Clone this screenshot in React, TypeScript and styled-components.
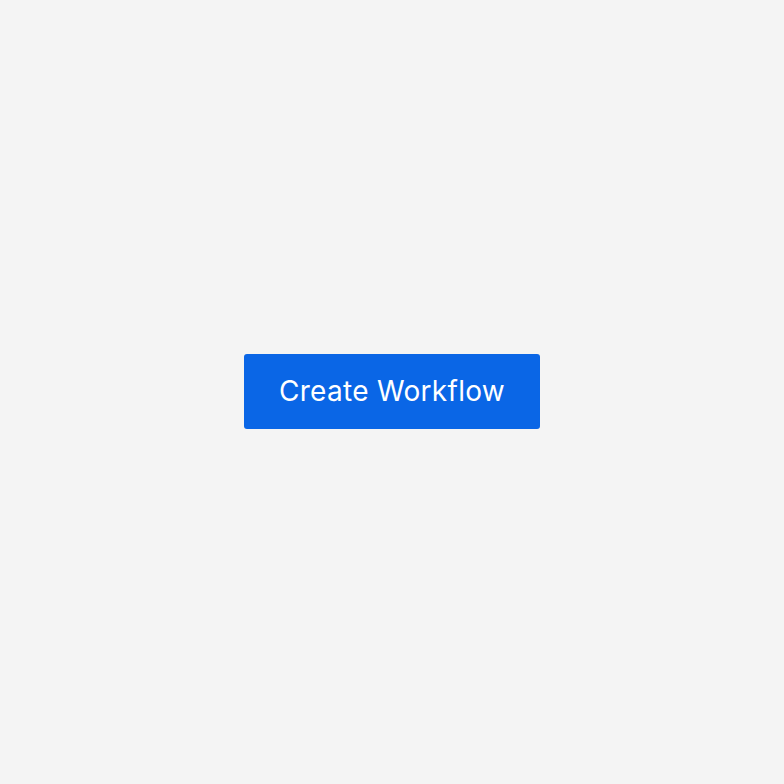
import styled, { createGlobalStyle } from 'styled-components';

const GlobalStyle = createGlobalStyle`
  html, body, #root {
    margin: 0;
    height: 100%;
  }
  body {
    background: #f4f4f4;
    font-family: 'Inter', 'Liberation Sans', sans-serif;
  }
`;

const Page = styled.div`
  height: 100%;
  display: flex;
  justify-content: center;
  align-items: center;
`;

const Button = styled.button`
  width: 296px;
  height: 75px;
  margin-top: -1px;
  padding: 0 0 2px;
  border: none;
  border-radius: 3px;
  background-color: #0a66e6;
  color: #ffffff;
  font-family: 'Inter', 'Liberation Sans', sans-serif;
  font-size: 28px;
  font-weight: 400;
  letter-spacing: 0.3px;
  cursor: pointer;
`;

const App = () => {
  return (
    <>
      <GlobalStyle />
      <Page>
        <Button>Create Workflow</Button>
      </Page>
    </>
  );
};

export default App;
